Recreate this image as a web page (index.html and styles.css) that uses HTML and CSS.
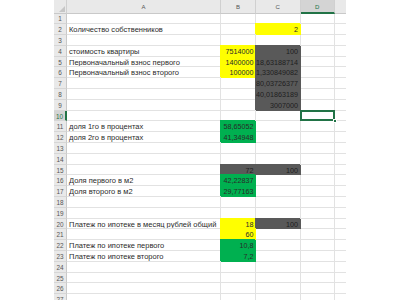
FILE: index.html
```html
<!DOCTYPE html>
<html lang="ru">
<head>
<meta charset="utf-8">
<link rel="stylesheet" href="styles.css">
</head>
<body>
<div class="sheet">
  <div class="h corner"><svg width="6" height="6" viewBox="0 0 6 6"><polygon points="6,0 6,6 0,6" fill="#c6c6c6"/></svg></div>
  <div class="h">A</div><div class="h">B</div><div class="h">C</div><div class="h sel">D</div><div class="h last"></div>

  <div class="n">1</div><div class="c"></div><div class="c"></div><div class="c"></div><div class="c"></div><div class="c last"></div>
  <div class="n">2</div><div class="c">Количество собственников</div><div class="c"></div><div class="c num y">2</div><div class="c"></div><div class="c last"></div>
  <div class="n">3</div><div class="c"></div><div class="c"></div><div class="c"></div><div class="c"></div><div class="c last"></div>
  <div class="n">4</div><div class="c">стоимость квартиры</div><div class="c num y">7514000</div><div class="c num g">100</div><div class="c"></div><div class="c last"></div>
  <div class="n">5</div><div class="c">Первоначальный взнос первого</div><div class="c num y">1400000</div><div class="c num g">18,63188714</div><div class="c"></div><div class="c last"></div>
  <div class="n">6</div><div class="c">Первоначальный взнос второго</div><div class="c num y">100000</div><div class="c num g">1,330849082</div><div class="c"></div><div class="c last"></div>
  <div class="n">7</div><div class="c"></div><div class="c"></div><div class="c num g">80,03726377</div><div class="c"></div><div class="c last"></div>
  <div class="n">8</div><div class="c"></div><div class="c"></div><div class="c num g">40,01863189</div><div class="c"></div><div class="c last"></div>
  <div class="n">9</div><div class="c"></div><div class="c"></div><div class="c num g">3007000</div><div class="c"></div><div class="c last"></div>
  <div class="n sel">10</div><div class="c"></div><div class="c"></div><div class="c"></div><div class="c active"><span class="box"></span><span class="handle"></span></div><div class="c last"></div>
  <div class="n">11</div><div class="c">доля 1го в процентах</div><div class="c num gr">58,65052</div><div class="c"></div><div class="c"></div><div class="c last"></div>
  <div class="n">12</div><div class="c">доля 2го в процентах</div><div class="c num gr">41,34948</div><div class="c"></div><div class="c"></div><div class="c last"></div>
  <div class="n">13</div><div class="c"></div><div class="c"></div><div class="c"></div><div class="c"></div><div class="c last"></div>
  <div class="n">14</div><div class="c"></div><div class="c"></div><div class="c"></div><div class="c"></div><div class="c last"></div>
  <div class="n">15</div><div class="c"></div><div class="c num g">72</div><div class="c num g">100</div><div class="c"></div><div class="c last"></div>
  <div class="n">16</div><div class="c">Доля первого в м2</div><div class="c num gr">42,22837</div><div class="c"></div><div class="c"></div><div class="c last"></div>
  <div class="n">17</div><div class="c">Доля второго в м2</div><div class="c num gr">29,77163</div><div class="c"></div><div class="c"></div><div class="c last"></div>
  <div class="n">18</div><div class="c"></div><div class="c"></div><div class="c"></div><div class="c"></div><div class="c last"></div>
  <div class="n">19</div><div class="c"></div><div class="c"></div><div class="c"></div><div class="c"></div><div class="c last"></div>
  <div class="n">20</div><div class="c">Платеж по ипотеке в месяц рублей общий</div><div class="c num y">18</div><div class="c num g">100</div><div class="c"></div><div class="c last"></div>
  <div class="n">21</div><div class="c"></div><div class="c num y">60</div><div class="c"></div><div class="c"></div><div class="c last"></div>
  <div class="n">22</div><div class="c">Платеж по ипотеке первого</div><div class="c num gr">10,8</div><div class="c"></div><div class="c"></div><div class="c last"></div>
  <div class="n">23</div><div class="c">Платеж по ипотеке второго</div><div class="c num gr">7,2</div><div class="c"></div><div class="c"></div><div class="c last"></div>
  <div class="n">24</div><div class="c"></div><div class="c"></div><div class="c"></div><div class="c"></div><div class="c last"></div>
  <div class="n">25</div><div class="c"></div><div class="c"></div><div class="c"></div><div class="c"></div><div class="c last"></div>
  <div class="n">26</div><div class="c"></div><div class="c"></div><div class="c"></div><div class="c"></div><div class="c last"></div>
  <div class="n">27</div><div class="c"></div><div class="c"></div><div class="c"></div><div class="c"></div><div class="c last"></div>
</div>
</body>
</html>
```
FILE: styles.css
```css
html, body {
  margin: 0;
  padding: 0;
  background: #ffffff;
  overflow: hidden;
  width: 400px;
  height: 300px;
}
.sheet {
  margin-left: 54px;
  width: 292px;
  display: grid;
  grid-template-columns: 13px 154px 35px 44.5px 34.5px 11px;
  grid-template-rows: 13.5px;
  grid-auto-rows: 10.8px;
  font-family: "Liberation Sans", Arial, sans-serif;
  font-size: 7.2px;
  color: #2a2a2a;
}
.sheet > div {
  box-sizing: border-box;
  white-space: nowrap;
  overflow: hidden;
}
.h {
  background: #e9e9e9;
  border-right: 1px solid #d0d0d0;
  border-bottom: 1px solid #c9c9c9;
  color: #555;
  font-size: 6px;
  display: flex;
  align-items: center;
  justify-content: center;
  padding-top: 2px;
}
.h.corner {
  align-items: flex-end;
  justify-content: flex-end;
  padding: 0 1px 1px 0;
}
.h.corner svg { display: block; }
.h.sel {
  background: #d4d4d4;
  color: #217346;
  border-bottom: 2px solid #217346;
}
.h.last { border-right: none; }
.n {
  background: #e9e9e9;
  border-right: 1px solid #c9c9c9;
  border-bottom: 1px solid #d6d6d6;
  color: #555;
  font-size: 6.4px;
  display: flex;
  align-items: center;
  justify-content: center;
  padding-top: 1px;
}
.n.sel {
  background: #d4d4d4;
  color: #217346;
  border-right: 2px solid #217346;
}
.c {
  border-right: 1px solid #e2e2e2;
  border-bottom: 1px solid #e2e2e2;
  display: flex;
  align-items: center;
  padding: 1px 2px 0 2px;
  line-height: 9px;
}
.c.txt, .c:not(.num) { font-size: 7.5px; }
.c.last { border-right: none; }
.c.num { justify-content: flex-end; padding-right: 1.5px; }
.c.y { background: #ffff00; border-color: #ffff00; box-shadow: -1px -1px 0 0 #ffff00; }
.c.g { background: #595959; border-color: #595959; box-shadow: -1px -1px 0 0 #595959; color: #1e1e1e; }
.c.gr { background: #00b050; border-color: #00b050; box-shadow: -1px -1px 0 0 #00b050; }
.c.active { position: relative; overflow: visible; }
.c.active .box {
  position: absolute;
  left: -1px;
  top: -1px;
  right: -1px;
  bottom: -1px;
  border: 2px solid #217346;
}
.c.active .handle {
  position: absolute;
  right: -3px;
  bottom: -3px;
  width: 4px;
  height: 4px;
  background: #217346;
  border: 1px solid #fff;
  box-sizing: border-box;
}
```
